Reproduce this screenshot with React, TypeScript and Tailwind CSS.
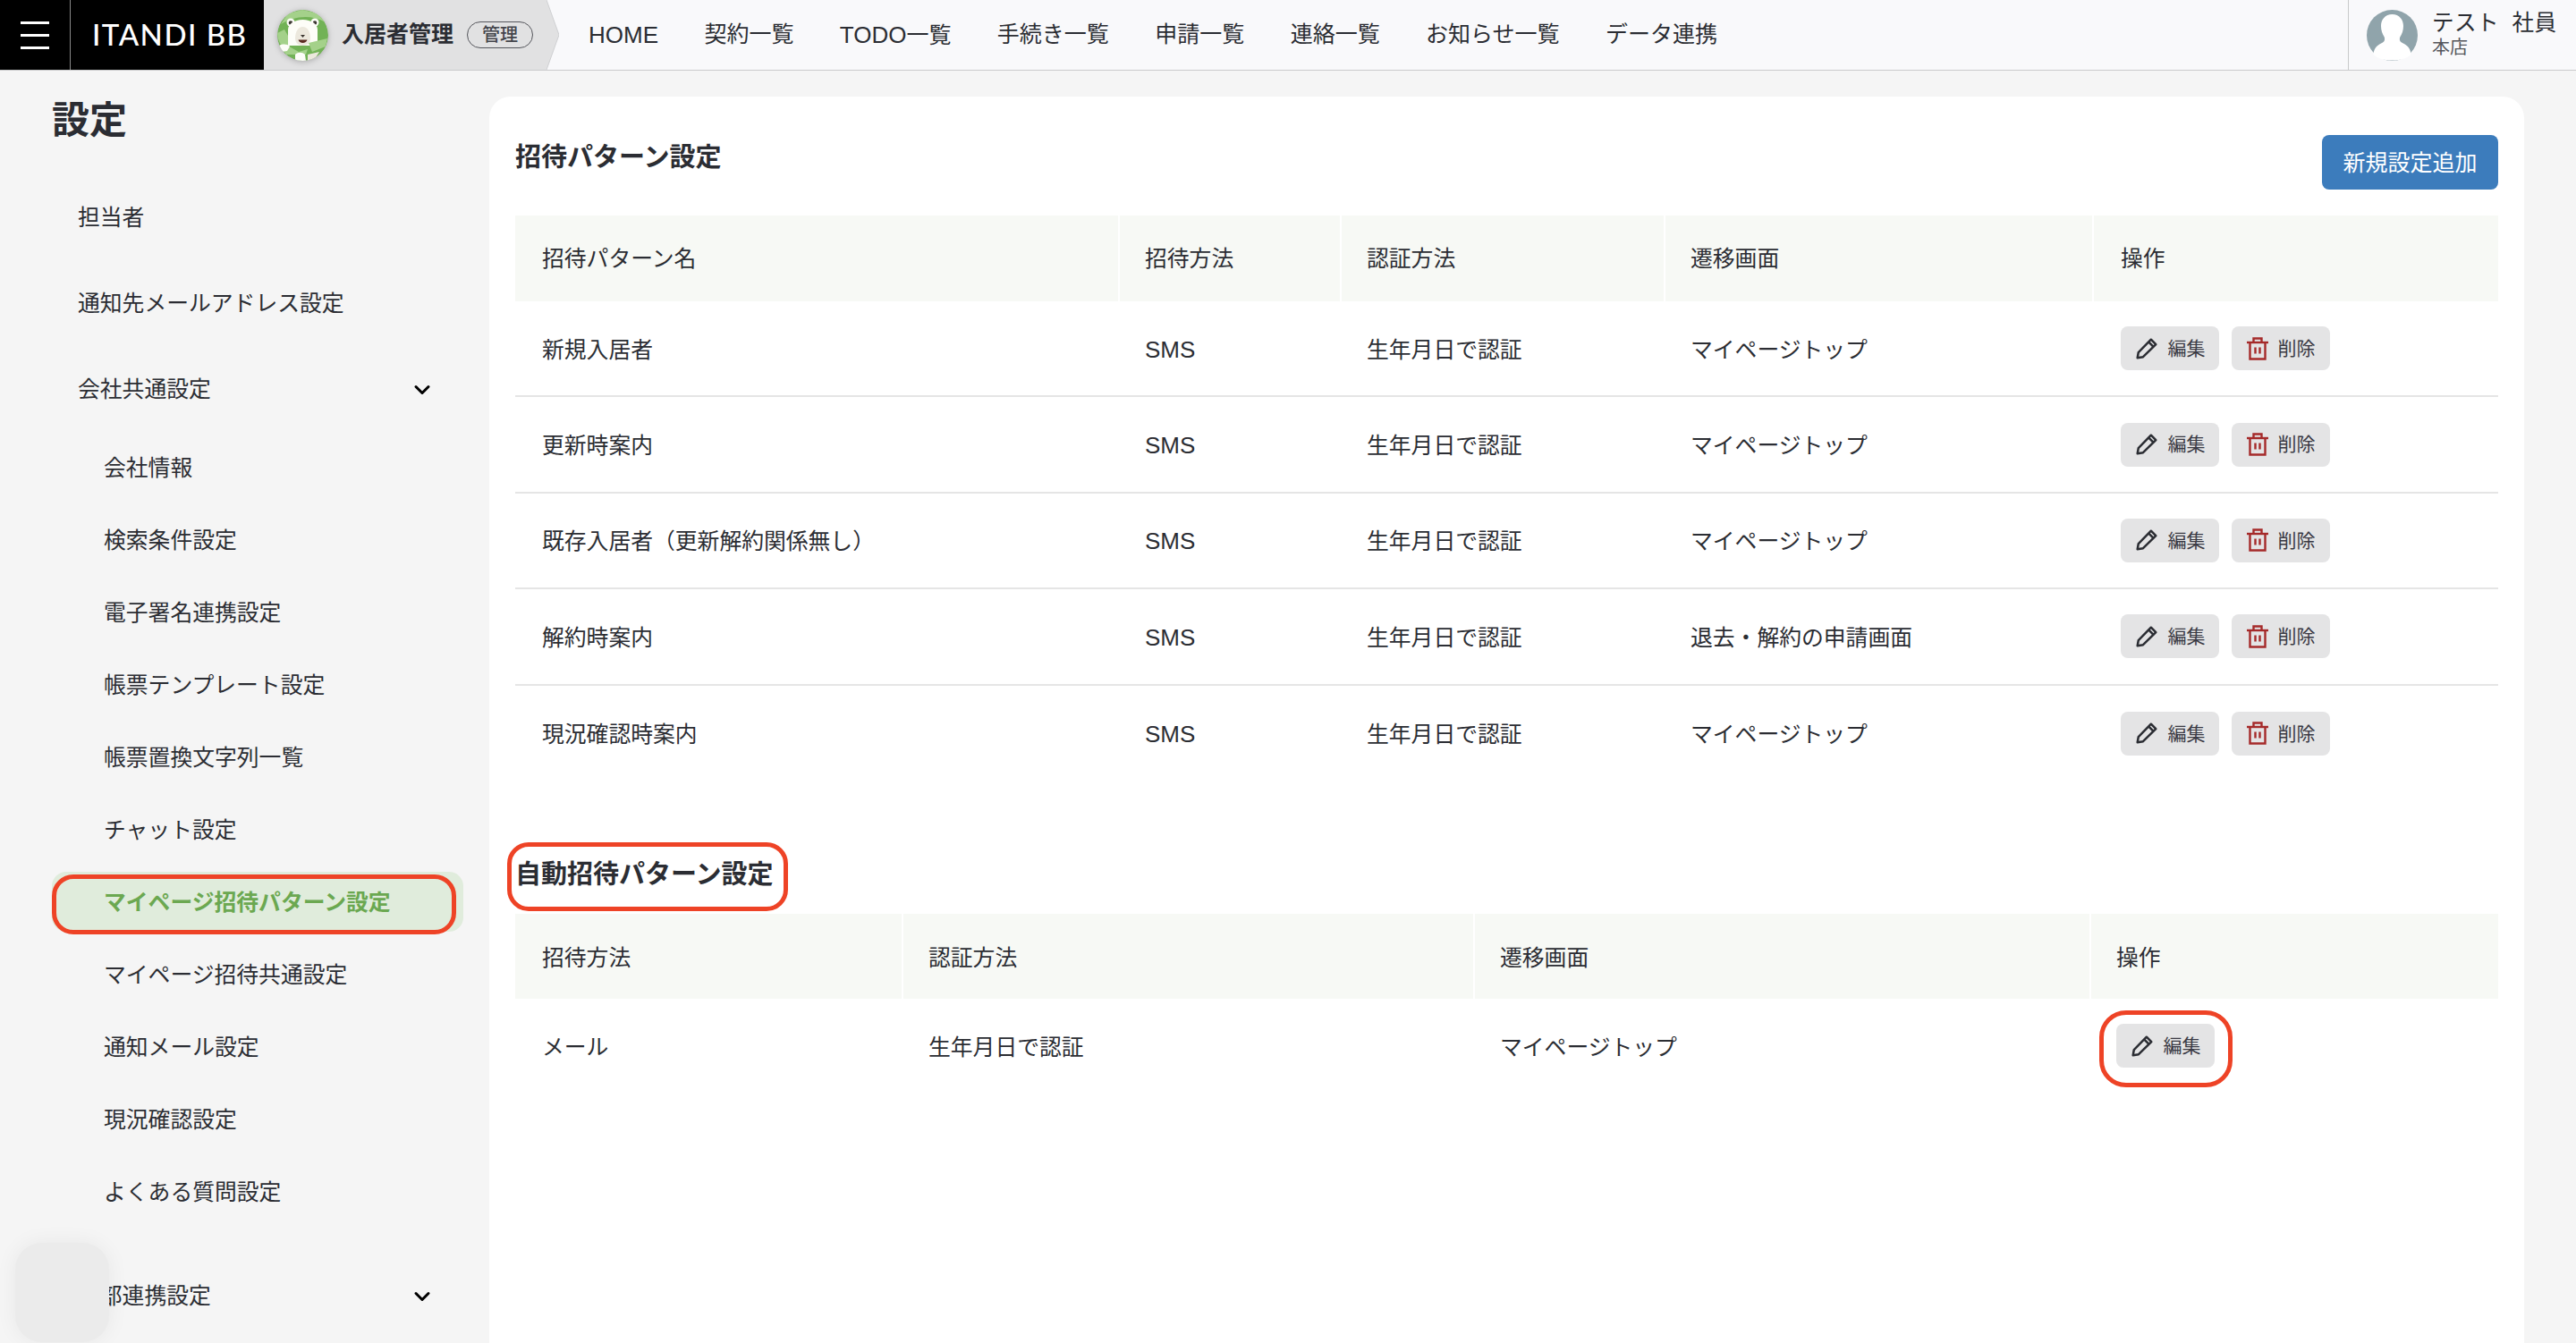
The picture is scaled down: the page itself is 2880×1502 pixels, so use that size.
import { ChevronDown } from "lucide-react"

const sans = "font-['Liberation_Sans','Noto_Sans_CJK_JP',sans-serif]"

const subItems = [
  "会社情報",
  "検索条件設定",
  "電子署名連携設定",
  "帳票テンプレート設定",
  "帳票置換文字列一覧",
  "チャット設定",
  "マイページ招待パターン設定",
  "マイページ招待共通設定",
  "通知メール設定",
  "現況確認設定",
  "よくある質問設定",
]

const patterns = [
  ["新規入居者", "SMS", "生年月日で認証", "マイページトップ"],
  ["更新時案内", "SMS", "生年月日で認証", "マイページトップ"],
  ["既存入居者（更新解約関係無し）", "SMS", "生年月日で認証", "マイページトップ"],
  ["解約時案内", "SMS", "生年月日で認証", "退去・解約の申請画面"],
  ["現況確認時案内", "SMS", "生年月日で認証", "マイページトップ"],
]

function PencilIcon() {
  return (
    <svg viewBox="0 0 24 24" className="h-[26px] w-[26px] text-[#2b2d33]" fill="none" stroke="currentColor" strokeWidth="2.3" strokeLinejoin="round">
      <path d="M2.500 21.500l1-5.800L16.500 2.500l5 5L8.300 20.500z" />
      <path d="M14 5l5 5" />
    </svg>
  )
}

function TrashIcon() {
  return (
    <svg viewBox="0 0 24 26" className="h-[26px] w-[24px] text-[#a52a2a]" fill="none" stroke="currentColor" strokeWidth="2.4">
      <path d="M0 6h24" />
      <path d="M7.5 6V1.5h9V6" />
      <path d="M3.5 6v18.5h17V6" />
      <path d="M9.5 11.5v7M14.5 11.5v7" />
    </svg>
  )
}

function ActionButton({ kind }: { kind: "edit" | "delete" }) {
  return (
    <button className="flex h-[49px] w-[110px] items-center justify-center gap-[11px] rounded-[8px] bg-[#e4e4e5] text-[21px] text-[#3a3a44]">
      {kind === "edit" ? <PencilIcon /> : <TrashIcon />}
      <span>{kind === "edit" ? "編集" : "削除"}</span>
    </button>
  )
}

function BearAvatar() {
  return (
    <svg viewBox="0 0 57 57" className="h-[57px] w-[57px] shrink-0 rounded-full drop-shadow-[0_1px_3px_rgba(0,0,0,0.25)]">
      <circle cx="28.5" cy="28.5" r="28.5" fill="#72b256" />
      <path d="M4 16C18 8 36 4 54 14L46 4 28 0 12 4z" fill="#a4d18a" />
      <path d="M0 26c1 10 4 16 12 18l4-8-8-14z" fill="#a4d18a" />
      <circle cx="15" cy="14" r="4.500" fill="#fdfdf8" />
      <circle cx="42" cy="14" r="4.500" fill="#fdfdf8" />
      <circle cx="15" cy="14.500" r="2.200" fill="#3a3530" />
      <circle cx="42" cy="14.500" r="2.200" fill="#3a3530" />
      <path d="M12 22c0-6 7-11 16.500-11S45 16 45 22v18H12z" fill="#fdfdf8" />
      <path d="M20 32c0-7 3-13 8.500-13S37 25 37 32c0 5-4 8-8.500 8S20 37 20 32z" fill="#ece8dd" />
      <path d="M26 28h5l-2.500 3z" fill="#3a3530" />
      <path d="M23.500 33.500h10c-1 4.500-9 4.500-10 0z" fill="#5a2a20" />
      <path d="M35 37l21-5-2 9-15 6z" fill="#a4d18a" />
      <path d="M4 42c4-3 8-3 11 0l9 5 10-3-2 6H10z" fill="#a4d18a" />
      <path d="M2 40c4-2 9-2 12 1l-3 5-6 1z" fill="#fdfdf8" />
      <path d="M20 50c3-3 8-3 11 0l1 7H20z" fill="#fdfdf8" />
      <path d="M34 50l13-3-5 8-8 2z" fill="#ece8dd" />
    </svg>
  )
}

function UserAvatar() {
  return (
    <svg viewBox="0 0 57 57" className="h-[57px] w-[57px] shrink-0">
      <circle cx="28.5" cy="28.5" r="28.5" fill="#90a4ab" />
      <path
        d="M28.500 5c-8 0-12.500 6-12.500 13 0 5 1.500 9 3.500 12 1 2 1 5-1.500 6.500-5 2.500-10 5-10.500 13.500 4.500 4 10.500 6.500 21 6.500s16.500-2.500 21-6.500c-.5-8.500-5.500-11-10.500-13.500-2.500-1.500-2.500-4.500-1.500-6.500 2-3 3.500-7 3.500-12 0-7-4.500-13-12.500-13z"
        fill="#fff"
      />
    </svg>
  )
}

function Ring({ className }: { className: string }) {
  return <div className={`pointer-events-none absolute border-[5px] border-[#ee4326] ${className}`} />
}

export default function App() {
  return (
    <div className={`${sans} flex h-[1502px] w-[2880px] flex-col overflow-hidden bg-[#f5f5f5] text-[24.8px] text-[#2b2d33]`}>
      <header className="flex h-[79px] shrink-0 border-b border-[#c9cacb] bg-[#f9f9fb]">
        <div className="flex h-[78px] w-[295px] shrink-0 bg-black text-white">
          <div className="flex w-[79px] shrink-0 flex-col justify-center gap-[11px] border-r border-[#8a8a8a] pl-[23px] pr-[23px]">
            <span className="h-[3px] bg-white" />
            <span className="h-[3px] bg-white" />
            <span className="h-[3px] bg-white" />
          </div>
          <div className="ml-[24px] self-center whitespace-nowrap font-['Lato',sans-serif] text-[33px] font-medium tracking-[1.5px]">ITANDI BB</div>
        </div>
        <div className="flex h-[78px] w-[316px] shrink-0 items-center bg-[#e1e1e2] pl-[15px]">
          <BearAvatar />
          <span className="ml-[15px] whitespace-nowrap text-[25px] font-bold">入居者管理</span>
          <span className="ml-[15px] flex h-[30px] w-[74px] items-center justify-center rounded-full border border-[#55565c] text-[20px] font-medium text-[#44454c]">管理</span>
        </div>
        <svg viewBox="0 0 14 78" className="h-[78px] w-[14px] shrink-0">
          <path d="M0 0L14 39 0 78z" fill="#e1e1e2" />
          <path d="M0 0L14 39 0 78" fill="none" stroke="#cfd0d2" strokeWidth="1" />
        </svg>
        <nav className="ml-[33px] flex items-center gap-[51.4px] whitespace-nowrap text-[25px]">
          <span className="text-[26px]">HOME</span>
          <span>契約一覧</span>
          <span>
            <span className="text-[26px]">TODO</span>一覧
          </span>
          <span>手続き一覧</span>
          <span>申請一覧</span>
          <span>連絡一覧</span>
          <span>お知らせ一覧</span>
          <span>データ連携</span>
        </nav>
        <div className="ml-auto flex w-[255px] shrink-0 items-center border-l border-[#c9cacb] pl-[20px]">
          <UserAvatar />
          <div className="ml-[16px] flex flex-col">
            <span className="-mt-[2px] text-[24.5px] leading-[30px] tracking-[0.5px] whitespace-pre">テスト  社員</span>
            <span className="text-[20px] leading-[24px] text-[#55565c]">本店</span>
          </div>
        </div>
      </header>

      <div className="flex min-h-0 flex-1">
        <aside className="relative w-[547px] shrink-0 pl-[58px]">
          <h1 className="h-[115px] pt-[26px] text-[42px] leading-[60px] font-bold">設定</h1>
          <div className="w-[460px]">
            <div className="flex h-[96px] items-center pl-[29px] pt-[3px]">担当者</div>
            <div className="flex h-[96px] items-center pl-[29px] pt-[3px]">通知先メールアドレス設定</div>
            <div className="flex h-[96px] items-center justify-between pl-[29px] pr-[32px] pt-[3px]">
              <span>会社共通設定</span>
              <ChevronDown className="h-[28px] w-[28px] text-black" strokeWidth={2.6} />
            </div>
            <ul className="mt-[7px] flex flex-col gap-[14px]">
              {subItems.map((item) =>
                item === "マイページ招待パターン設定" ? (
                  <li key={item} className="relative flex h-[67px] items-center rounded-[16px] bg-[#e0ecdc] pl-[58px] pt-[2px] font-bold text-[#6ba851]">
                    {item}
                    <Ring className="left-0 top-[3px] h-[67px] w-[452px] rounded-[24px]" />
                  </li>
                ) : (
                  <li key={item} className="flex h-[67px] items-center pl-[58px] pt-[2px]">
                    {item}
                  </li>
                ),
              )}
            </ul>
            <div className="mt-[34px] flex h-[96px] items-center justify-between pl-[29px] pr-[32px] pt-[3px]">
              <span>外部連携設定</span>
              <ChevronDown className="h-[28px] w-[28px] text-black" strokeWidth={2.6} />
            </div>
          </div>
          <div className="absolute left-[17px] top-[1311px] h-[111px] w-[105px] rounded-[30px] bg-[#ebebeb] shadow-[0_0_24px_rgba(0,0,0,0.06)]" />
        </aside>

        <main className="mt-[29px] h-[1500px] w-[2275px] shrink-0 rounded-[24px] bg-white px-[29px] pt-[43px]">
          <div className="mb-[29px] flex items-start justify-between">
            <h2 className="mt-[5px] text-[29px] leading-[40px] font-bold">招待パターン設定</h2>
            <button className="h-[61px] w-[197px] rounded-[8px] bg-[#3c7cbc] pt-[2px] text-[25px] text-white">新規設定追加</button>
          </div>

          <div className="grid h-[96px] grid-cols-[674px_248px_362px_479px_1fr] items-stretch bg-[#f7f9f5]">
            {["招待パターン名", "招待方法", "認証方法", "遷移画面", "操作"].map((label, i) => (
              <div key={label} className={`flex items-center pt-[2px] ${i > 0 ? "border-l-2 border-white pl-[28px]" : "pl-[30px]"} ${i === 4 ? "pl-[30px]" : ""}`}>
                {label}
              </div>
            ))}
          </div>
          {patterns.map((row, i) => (
            <div
              key={row[0]}
              className={`grid h-[107.4px] grid-cols-[674px_248px_362px_479px_1fr] items-center ${i < patterns.length - 1 ? "border-b-2 border-[#e5e5e5]" : ""}`}
            >
              {row.map((cell) => (
                <div key={cell} className={`pl-[30px] pt-[3px] ${cell === "SMS" ? "text-[26px]" : ""}`}>
                  {cell}
                </div>
              ))}
              <div className="flex gap-[14px] pl-[32px]">
                <ActionButton kind="edit" />
                <ActionButton kind="delete" />
              </div>
            </div>
          ))}

          <h2 className="relative mb-[24px] mt-[82px] w-fit pt-[3px] text-[29px] leading-[39px] font-bold">
            自動招待パターン設定
            <Ring className="-left-[9px] -top-[14px] h-[77px] w-[314px] rounded-[24px]" />
          </h2>
          <div className="grid h-[95px] grid-cols-[432px_639px_689px_1fr] items-stretch bg-[#f7f9f5]">
            {["招待方法", "認証方法", "遷移画面", "操作"].map((label, i) => (
              <div key={label} className={`flex items-center pt-[4px] ${i > 0 ? "border-l-2 border-white pl-[28px]" : "pl-[30px]"}`}>
                {label}
              </div>
            ))}
          </div>
          <div className="grid h-[106px] grid-cols-[432px_639px_689px_1fr] items-center">
            <div className="pl-[30px] pt-[4px]">メール</div>
            <div className="pl-[30px] pt-[4px]">生年月日で認証</div>
            <div className="pl-[30px] pt-[4px]">マイページトップ</div>
            <div className="relative ml-[30px] w-fit">
              <ActionButton kind="edit" />
              <Ring className="-left-[19px] -top-[15px] h-[86px] w-[149px] rounded-[30px]" />
            </div>
          </div>
        </main>
      </div>
    </div>
  )
}
